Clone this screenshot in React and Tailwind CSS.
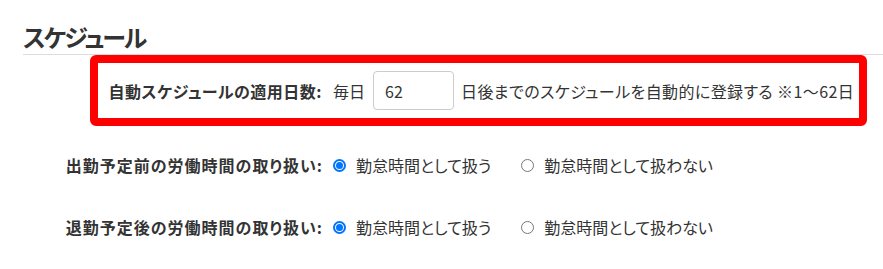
import React from "react";

const font = { fontFamily: '"Noto Sans CJK JP", "Noto Sans", sans-serif' };

function Radio({ checked, label }) {
  return (
    <label className="flex items-center">
      {checked ? (
        <span className="w-[13px] h-[13px] rounded-full border-[2px] border-[#0075ff] bg-white flex items-center justify-center">
          <span className="w-[7px] h-[7px] rounded-full bg-[#0075ff]" />
        </span>
      ) : (
        <span className="w-[13px] h-[13px] rounded-full border border-[#767676] bg-white" />
      )}
      <span className="ml-[10px] text-[16px] text-[#333]">{label}</span>
    </label>
  );
}

function RadioRow({ label }) {
  return (
    <div className="flex items-center h-[40px]">
      <div className="w-[300px] text-right font-bold text-[16px] text-[#333] tracking-[1px]">{label}</div>
      <div className="ml-[10px] flex items-center">
        <Radio checked label="勤怠時間として扱う" />
        <div className="ml-[30px]">
          <Radio label="勤怠時間として扱わない" />
        </div>
      </div>
    </div>
  );
}

export default function App() {
  return (
    <div className="w-[883px] h-[269px] bg-white pl-[23px] pt-[20px] [font-feature-settings:'palt']" style={font}>
      <div className="h-[35px] border-b border-[#dddddd] flex items-center">
        <h2 className="text-[24px] font-bold leading-[34px] text-[#333] tracking-[-2px]">スケジュール</h2>
      </div>
      <div className="ml-[67px] w-[777px] h-[71px] border-[8px] border-[#ff0000] rounded-[6px] flex items-center">
        <div className="w-[224px] text-right font-bold text-[16px] text-[#333] tracking-[0.5px]">自動スケジュールの適用日数:</div>
        <div className="ml-[11px] text-[16px] text-[#333]">毎日</div>
        <div className="ml-[8px] w-[81px] h-[39px] border border-[#cccccc] rounded-[4px] flex items-center pl-[11px] text-[16px] text-[#333]">62</div>
        <div className="ml-[7px] text-[16px] text-[#333] whitespace-nowrap tracking-[0.4px]">日後までのスケジュールを自動的に登録する ※1〜62日</div>
      </div>
      <div className="mt-[19px]">
        <RadioRow label="出勤予定前の労働時間の取り扱い:" />
      </div>
      <div className="mt-[22px]">
        <RadioRow label="退勤予定後の労働時間の取り扱い:" />
      </div>
    </div>
  );
}
